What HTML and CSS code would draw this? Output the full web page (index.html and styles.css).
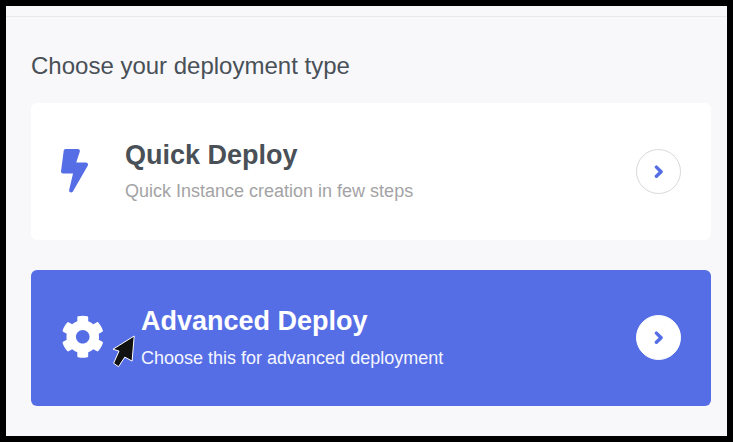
FILE: index.html
```html
<!DOCTYPE html>
<html lang="en">
<head>
<meta charset="utf-8">
<title>Deployment type</title>
<link rel="stylesheet" href="styles.css">
</head>
<body>
<header class="topbar"></header>
<main class="content">
  <h1 class="heading">Choose your deployment type</h1>
  <section class="card">
    <svg class="bolt" viewBox="0 0 320 512" preserveAspectRatio="none"><path fill="currentColor" d="M296 160H180.6l42.6-129.8C227.2 15 215.7 0 200 0H56C44 0 33.8 8.9 32.2 20.8l-32 240C-1.7 275.2 9.5 288 24 288h118.7L96.6 482.5c-3.6 15.2 8 29.5 23.3 29.5 8.4 0 16.4-4.4 20.8-12l176-304c9.3-15.9-2.2-36-20.7-36z"/></svg>
    <div class="copy">
      <h2 class="title">Quick Deploy</h2>
      <p class="subtitle">Quick Instance creation in few steps</p>
    </div>
    <span class="go"><svg class="chevron" viewBox="0 0 10 14"><path d="M2.4 2.1 7.1 6.7l-4.7 4.6"/></svg></span>
  </section>
  <section class="card card-active">
    <svg class="gear" viewBox="0 0 512 512"><path fill="currentColor" d="M487.4 315.7l-42.6-24.6c4.3-23.2 4.3-47 0-70.2l42.6-24.6c4.9-2.8 7.1-8.6 5.5-14-11.1-35.6-30-67.8-54.7-94.6-3.8-4.1-10-5.1-14.8-2.3L380.8 110c-17.9-15.4-38.5-27.3-60.8-35.1V25.8c0-5.6-3.9-10.5-9.4-11.7-36.7-8.2-74.3-7.8-109.2 0-5.5 1.2-9.4 6.1-9.4 11.7V75c-22.2 7.9-42.8 19.8-60.8 35.1L88.7 85.5c-4.9-2.8-11-1.9-14.8 2.3-24.7 26.7-43.6 58.9-54.7 94.6-1.7 5.4.6 11.2 5.5 14L67.3 221c-4.3 23.2-4.3 47 0 70.2l-42.6 24.6c-4.9 2.8-7.1 8.6-5.5 14 11.1 35.6 30 67.8 54.7 94.6 3.8 4.1 10 5.1 14.8 2.3l42.6-24.6c17.9 15.4 38.5 27.3 60.8 35.1v49.2c0 5.6 3.9 10.5 9.4 11.7 36.7 8.2 74.3 7.8 109.2 0 5.5-1.2 9.4-6.1 9.4-11.7v-49.2c22.2-7.9 42.8-19.8 60.8-35.1l42.6 24.6c4.9 2.8 11 1.9 14.8-2.3 24.7-26.7 43.6-58.9 54.7-94.6 1.5-5.5-.7-11.3-5.6-14.1zM256 336c-44.1 0-80-35.9-80-80s35.9-80 80-80 80 35.9 80 80-35.9 80-80 80z"/></svg>
    <div class="copy">
      <h2 class="title">Advanced Deploy</h2>
      <p class="subtitle">Choose this for advanced deployment</p>
    </div>
    <span class="go"><svg class="chevron" viewBox="0 0 10 14"><path d="M2.4 2.1 7.1 6.7l-4.7 4.6"/></svg></span>
    <svg class="cursor" viewBox="0 0 26 34"><path d="M23.2 1 2 14.2l6 1.9L2.6 28.2l4.9 3.5 6.3-9.6 7.3 4z"/></svg>
  </section>
</main>
</body>
</html>
```
FILE: styles.css
```css
* { box-sizing: border-box; }
body {
  margin: 0;
  height: 442px;
  border: 6px solid #000;
  background: #f8f8fb;
  color: #495057;
  font-family: "Liberation Sans", Arial, sans-serif;
  overflow: hidden;
}
.topbar { height: 11px; border-bottom: 1px solid #e9e9ec; }
.content { padding: 35px 16px 0 25px; }
.heading { margin: 0 0 23px; font-size: 24px; font-weight: 400; line-height: 28px; }
.card {
  position: relative;
  display: flex;
  align-items: center;
  height: 137px;
  margin-bottom: 30px;
  padding: 0 30px;
  border-radius: 6px;
  background: #fff;
}
.card-active { height: 136px; padding-bottom: 1px; background: #556ee6; color: #fff; }
.bolt { width: 27px; height: 43.5px; margin: 0 37px 1px 0; color: #556ee6; }
.gear { width: 43.5px; height: 43.5px; margin: 0 36.5px 1px 0; }
.copy { flex: 1; padding-bottom: 4px; }
.title { margin: 0; font-size: 27px; font-weight: 700; line-height: 32px; }
.subtitle { margin: 10px 0 0; font-size: 18px; line-height: 20px; color: #a3a3a5; }
.card-active .copy { padding-bottom: 2px; }
.card-active .subtitle { margin-top: 11px; color: #f4f6fe; }
.go {
  display: flex;
  align-items: center;
  justify-content: center;
  width: 45px;
  height: 45px;
  border: 1px solid #d9d9dc;
  border-radius: 50%;
  background: #fff;
}
.card-active .go { border-color: #fff; }
.chevron { width: 10px; height: 14px; fill: none; stroke: #556ee6; stroke-width: 3.4; stroke-linecap: round; stroke-linejoin: round; }
.cursor { position: absolute; left: 80px; top: 65px; width: 26px; height: 34px; fill: #111; stroke: #fff; stroke-width: 1; }
```
